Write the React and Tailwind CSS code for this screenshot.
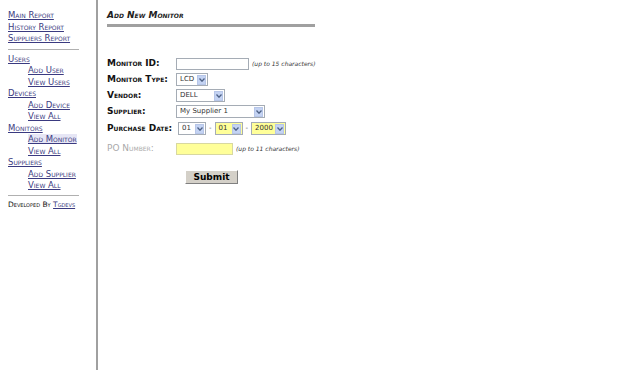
import React from 'react';

const sc = '[font-variant:small-caps]';

function NavLink({ children, indent, active }) {
  return (
    <div className={indent ? 'pl-[20px]' : ''}>
      <a
        href="#"
        className={`text-[#3a3a80] underline ${sc} ${active ? 'bg-[#e6e6f5]' : ''}`}
      >
        {children}
      </a>
    </div>
  );
}

function Select({ value, width, yellow }) {
  return (
    <div
      className={`flex items-center justify-between h-[13px] border border-[#a5acb5] ${yellow ? 'bg-[#ffff99]' : 'bg-white'} pl-[3px] pr-[1px]`}
      style={{ width }}
    >
      <span className="text-[7px] leading-none text-[#333]">{value}</span>
      <span className="w-[9px] h-[10px] bg-[#c4d3f3] border border-[#b7c6e8] flex items-center justify-center">
        <svg width="6" height="4" viewBox="0 0 6 4">
          <path d="M0.5 0.5 L3 3.2 L5.5 0.5" stroke="#4d6185" strokeWidth="1.3" fill="none" />
        </svg>
      </span>
    </div>
  );
}

function Row({ label, children, muted }) {
  return (
    <div className="flex items-center h-[16px]">
      <div className={`w-[69px] font-bold text-[9px] ${sc} ${muted ? 'text-[#aaaaaa] font-normal' : 'text-[#111]'}`}>
        {label}
      </div>
      <div className="flex items-center">{children}</div>
    </div>
  );
}

export default function App() {
  return (
    <div className="flex w-[640px] h-[370px] bg-white font-['DejaVu_Sans',Verdana,sans-serif]">
      <aside className="w-[98px] shrink-0 border-r-2 border-[#a0a0a0] pt-[10px] pl-[8px] text-[8.5px] leading-[11.5px]">
        <NavLink>Main Report</NavLink>
        <NavLink>History Report</NavLink>
        <NavLink>Suppliers Report</NavLink>
        <div className="h-px bg-[#b0b0b0] w-[71px] my-[4px]" />
        <NavLink>Users</NavLink>
        <NavLink indent>Add User</NavLink>
        <NavLink indent>View Users</NavLink>
        <NavLink>Devices</NavLink>
        <NavLink indent>Add Device</NavLink>
        <NavLink indent>View All</NavLink>
        <NavLink>Monitors</NavLink>
        <NavLink indent active>Add Monitor</NavLink>
        <NavLink indent>View All</NavLink>
        <NavLink>Suppliers</NavLink>
        <NavLink indent>Add Supplier</NavLink>
        <NavLink indent>View All</NavLink>
        <div className="h-px bg-[#b0b0b0] w-[71px] mt-[3px] mb-[3px]" />
        <div className={`${sc} text-[7.5px] text-[#111]`}>
          Developed By <a href="#" className="underline text-[#3a3a80]">Tgdevs</a>
        </div>
      </aside>

      <main className="flex-1 pl-[9px] pt-[9px]">
        <h1 className={`font-bold italic text-[9px] text-[#222] ${sc}`}>Add New Monitor</h1>
        <div className="w-[208px] h-[3px] bg-[#a0a0a0] mt-[1px]" />

        <div className="mt-[29px] flex flex-col">
          <Row label="Monitor ID:">
            <div className="w-[73px] h-[12px] border border-[#a5acb5] bg-white" />
            <span className="ml-[3px] text-[6px] italic text-[#333]">(up to 15 characters)</span>
          </Row>
          <Row label="Monitor Type:">
            <Select value="LCD" width={32} />
          </Row>
          <Row label="Vendor:">
            <Select value="DELL" width={49} />
          </Row>
          <Row label="Supplier:">
            <Select value="My Supplier 1" width={89} />
          </Row>
          <div className="h-px" />
          <Row label="Purchase Date:">
            <div className="ml-[2px]" />
            <Select value="01" width={28} />
            <span className="mx-[3px] text-[7px] text-[#555]">-</span>
            <Select value="01" width={28} yellow />
            <span className="mx-[3px] text-[7px] text-[#555]">-</span>
            <Select value="2000" width={35} yellow />
          </Row>
          <div className="h-[4px]" />
          <Row label="PO Number:" muted>
            <div className="w-[57px] h-[12px] border border-[#d8d8a0] bg-[#ffff99]" />
            <span className="ml-[3px] text-[6px] italic text-[#333]">(up to 11 characters)</span>
          </Row>
        </div>

        <div className="mt-[6px] pl-[78px]">
          <button className="w-[53px] h-[14px] bg-[#d4d0c8] border border-t-white border-l-white border-r-[#808080] border-b-[#808080] text-[9px] font-bold text-black leading-none">
            Submit
          </button>
        </div>
      </main>
    </div>
  );
}
